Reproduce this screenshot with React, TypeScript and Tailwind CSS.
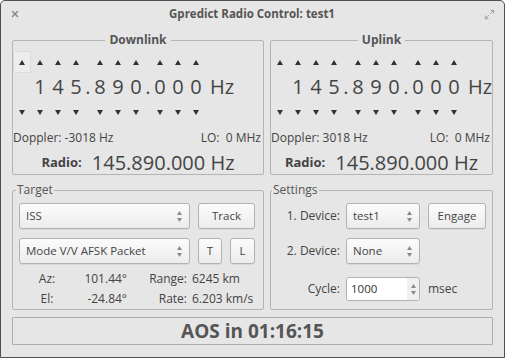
import { X, Maximize2 } from 'lucide-react'

const font = { fontFamily: '"Open Sans", "DejaVu Sans", sans-serif' }

function Tri({ down = false, w = 6, h = 5 }: { down?: boolean; w?: number; h?: number }) {
  return (
    <svg width={w} height={h} viewBox={`0 0 ${w} ${h}`}>
      <path d={down ? `M0 0H${w}L${w / 2} ${h}Z` : `M0 ${h}H${w}L${w / 2} 0Z`} fill="currentColor" />
    </svg>
  )
}

function Spin() {
  return (
    <span className="flex flex-col items-center gap-[3px] text-[#8a8a8a]">
      <Tri w={5} h={4} />
      <Tri down w={5} h={4} />
    </span>
  )
}

// arrow row / digit row share the same columns: 4 digits, dot, 3, dot, 3
const groups = [
  ['', '1', '4', '5'],
  ['8', '9', '0'],
  ['0', '0', '0'],
]

function ArrowRow({ down = false, focus = false }: { down?: boolean; focus?: boolean }) {
  return (
    <div className="flex h-[22px] items-center">
      {groups.map((g, gi) => (
        <div key={gi} className="flex">
          {gi > 0 && <div className="w-[6px]" />}
          {g.map((_, i) => (
            <div
              key={i}
              className={`w-[18px] h-[22px] flex items-center justify-center text-[#333] ${
                focus && gi === 0 && i === 0 ? 'bg-[#ededed] rounded-[2px] border border-[#dcdcdc]' : ''
              }`}
            >
              <Tri down={down} />
            </div>
          ))}
        </div>
      ))}
    </div>
  )
}

function DigitRow() {
  return (
    <div className="flex h-[28px] items-center text-[20px] text-[#444] leading-none">
      {groups.map((g, gi) => (
        <div key={gi} className="flex">
          {gi > 0 && <div className="w-[6px] text-center">.</div>}
          {g.map((d, i) => (
            <div key={i} className="w-[18px] text-center">
              {d}
            </div>
          ))}
        </div>
      ))}
      <span className="ml-[5px]">Hz</span>
    </div>
  )
}

function Link({ title, doppler, width, focus }: { title: string; doppler: string; width: string; focus?: boolean }) {
  return (
    <fieldset className={`border border-[#b4b4b4] rounded-[2px] ${width} min-w-0`}>
      <legend className="mx-auto px-[4px] text-[12px] font-bold leading-[14px] text-[#555]">{title}</legend>
      <div className="pt-[4px]">
        <ArrowRow focus={focus} />
        <DigitRow />
        <ArrowRow down />
      </div>
      <div className="mt-[7px] h-[16px] flex items-center justify-between pr-[2px] text-[12px] text-[#444]">
        <span>Doppler: {doppler}</span>
        <span>LO:&nbsp; 0 MHz</span>
      </div>
      <div className="mt-[6px] h-[22px] flex items-center justify-center gap-[10px] text-[#444]">
        <span className="text-[13px] font-bold">Radio:</span>
        <span className="text-[20px] leading-none">145.890.000 Hz</span>
      </div>
    </fieldset>
  )
}

const box =
  'h-[26px] flex items-center rounded-[3px] border border-[#b2b2b2] bg-gradient-to-b from-[#fcfcfc] to-[#ececec] shadow-[0_1px_0_rgba(0,0,0,0.06)] text-[11.5px] text-[#444]'
const btn = `${box} justify-center`

function Combo({ text, w }: { text: string; w: string }) {
  return (
    <div className={`${box} ${w} justify-between pl-[6px] pr-[7px]`}>
      <span>{text}</span>
      <Spin />
    </div>
  )
}

export default function App() {
  return (
    <div
      style={font}
      className="w-[505px] h-[358px] bg-[#e6e6e6] border border-[#4f4f4f] rounded-t-[5px] flex flex-col text-[#444] overflow-hidden"
    >
      {/* title bar */}
      <div className="h-[26px] flex items-center justify-between px-[9px] shrink-0">
        <X className="w-[10px] h-[10px] text-[#808080]" strokeWidth={3} />
        <span className="text-[11.5px] font-bold text-[#555]">Gpredict Radio Control: test1</span>
        <Maximize2 className="w-[11px] h-[11px] text-[#9a9a9a]" strokeWidth={2} />
      </div>

      <div className="px-[11px] pt-[6px] flex flex-col">
        <div className="flex gap-[6px]">
          <Link title="Downlink" doppler="-3018 Hz" width="w-[252px]" focus />
          <Link title="Uplink" doppler="3018 Hz" width="w-[223px]" />
        </div>

        <div className="flex gap-[6px] mt-[8px]">
          <fieldset className="border border-[#b4b4b4] rounded-[2px] w-[252px] h-[127px] px-[6px]">
            <legend className="ml-[-3px] px-[1px] text-[12px] leading-[14px] text-[#555]">Target</legend>
            <div className="flex gap-[8px] mt-[6px]">
              <Combo text="ISS" w="w-[171px]" />
              <div className={`${btn} w-[57px]`}>Track</div>
            </div>
            <div className="flex gap-[8px] mt-[9px]">
              <Combo text="Mode V/V AFSK Packet" w="w-[171px]" />
              <div className={`${btn} w-[24px]`}>T</div>
              <div className={`${btn} w-[25px]`}>L</div>
            </div>
            <div className="grid grid-cols-[56px_52px_65px_auto] text-[12px] mt-[5px] leading-[20px]">
              <span className="text-center">Az:</span>
              <span className="text-right">101.44°</span>
              <span className="text-right pr-[5px]">Range:</span>
              <span>6245 km</span>
              <span className="text-center">El:</span>
              <span className="text-right">-24.84°</span>
              <span className="text-right pr-[5px]">Rate:</span>
              <span>6.203 km/s</span>
            </div>
          </fieldset>

          <fieldset className="border border-[#b4b4b4] rounded-[2px] w-[223px] h-[127px]">
            <legend className="ml-[1px] px-[1px] text-[12px] leading-[14px] text-[#555]">Settings</legend>
            <div className="grid grid-cols-[69px_74px_auto] gap-x-[6px] items-center text-[12px] mt-[6px]">
              <span className="text-right">1. Device:</span>
              <Combo text="test1" w="w-[74px]" />
              <div className={`${btn} w-[58px] ml-[2px]`}>Engage</div>
            </div>
            <div className="grid grid-cols-[69px_74px_auto] gap-x-[6px] items-center text-[12px] mt-[9px]">
              <span className="text-right">2. Device:</span>
              <Combo text="None" w="w-[74px]" />
            </div>
            <div className="grid grid-cols-[69px_74px_auto] gap-x-[6px] items-center text-[12px] mt-[13px]">
              <span className="text-right">Cycle:</span>
              <div className="h-[24px] w-[74px] flex rounded-[3px] border border-[#b2b2b2] overflow-hidden">
                <div className="flex-1 bg-white pl-[4px] flex items-center text-[11.5px] text-[#333]">1000</div>
                <div className="w-[12px] bg-[#f0f0f0] flex items-center justify-center">
                  <Spin />
                </div>
              </div>
              <span className="ml-[2px]">msec</span>
            </div>
          </fieldset>
        </div>

        <div className="mt-[7px] h-[28px] border border-[#adadad] rounded-[1px] flex items-center justify-center text-[19px] font-bold text-[#555] leading-none">
          AOS in 01:16:15
        </div>
      </div>
    </div>
  )
}
